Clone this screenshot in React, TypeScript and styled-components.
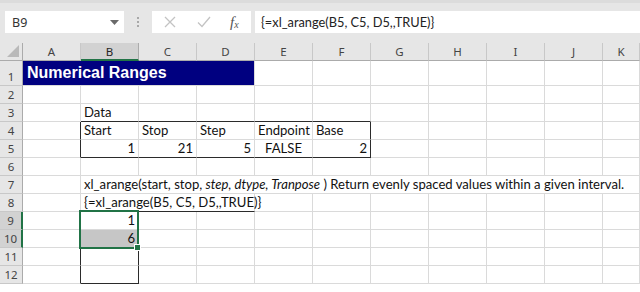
import styled, { createGlobalStyle } from "styled-components";

const GlobalStyle = createGlobalStyle`
  html, body {
    margin: 0;
    padding: 0;
    background: #ffffff;
  }
  body {
    width: 640px;
    height: 292px;
    overflow: hidden;
    font-family: "Lato", "Liberation Sans", sans-serif;
  }
`;

const GREEN = "#217346";
const GRID = "#dadada";
const DARK = "#2b2b2b";

const COLS = ["A", "B", "C", "D", "E", "F", "G", "H", "I", "J", "K"];
const ROWS = 12;

type Box = { r1: number; r2: number; c1: number; c2: number };

// outlined ranges: B4:F5 and B9:B12 (cols are 0-based, A = 0)
const boxes: Box[] = [
    { r1: 4, r2: 5, c1: 1, c2: 5 },
    { r1: 9, r2: 12, c1: 1, c2: 1 },
];

const rightDark = (r: number, c: number) =>
    boxes.some(b => r >= b.r1 && r <= b.r2 && (c === b.c2 || c + 1 === b.c1));
const bottomDark = (r: number, c: number) =>
    boxes.some(b => c >= b.c1 && c <= b.c2 && (r === b.r2 || r + 1 === b.r1));

type CellData = {
    text?: React.ReactNode;
    align?: "left" | "right" | "center";
    span?: number;
    spill?: boolean;
};

const data: Record<string, CellData> = {
    "3,1": { text: "Data" },
    "4,1": { text: "Start" },
    "4,2": { text: "Stop" },
    "4,3": { text: "Step" },
    "4,4": { text: "Endpoint" },
    "4,5": { text: "Base" },
    "5,1": { text: "1", align: "right" },
    "5,2": { text: "21", align: "right" },
    "5,3": { text: "5", align: "right" },
    "5,4": { text: "FALSE", align: "center" },
    "5,5": { text: "2", align: "right" },
    "7,1": {
        span: 10,
        text: (
            <span>
                xl_arange(start, stop, <i>step, dtype, Tranpose</i> ) Return evenly spaced values within a given interval.
            </span>
        ),
    },
    "8,1": { span: 3, spill: true, text: "{=xl_arange(B5, C5, D5,,TRUE)}" },
    "9,1": { text: "1", align: "right" },
    "10,1": { text: "6", align: "right" },
};

export default function App() {
    const cells: React.ReactNode[] = [];
    for (let r = 1; r <= ROWS; r++) {
        const sel = r === 9 || r === 10;
        cells.push(
            <RowHeader key={`h${r}`} $row={r + 1} selected={sel}>{r}</RowHeader>
        );
        if (r === 1) {
            cells.push(<TitleCell key="title">Numerical Ranges</TitleCell>);
            for (let c = 4; c < COLS.length; c++) {
                cells.push(
                    <Cell key={`1,${c}`} $row={2} $col={c + 2} $right={GRID} $bottom={GRID} />
                );
            }
            continue;
        }
        for (let c = 0; c < COLS.length; c++) {
            const d = data[`${r},${c}`];
            const span = d?.span ?? 1;
            const last = c + span - 1;
            cells.push(
                <Cell
                    key={`${r},${c}`}
                    $row={r + 1}
                    $col={c + 2}
                    $span={span}
                    $spill={d?.spill}
                    $align={d?.align ?? "left"}
                    $right={rightDark(r, last) ? DARK : GRID}
                    $bottom={bottomDark(r, c) ? DARK : GRID}
                    $fill={r === 10 && c === 1 ? "#c6c6c6" : "transparent"}
                >
                    {d?.text}
                </Cell>
            );
            c = last;
        }
    }

    return (
        <>
            <GlobalStyle />
            <Page>
                <FormulaBar>
                    <NameBox>
                        <span>B9</span>
                        <svg width="9" height="5" viewBox="0 0 9 5">
                            <path d="M0 0 H9 L4.5 5 Z" fill="#6a6a6a" />
                        </svg>
                    </NameBox>
                    <Grip>
                        <i /><i /><i />
                    </Grip>
                    <FxBox>
                        <svg width="12" height="12" viewBox="0 0 12 12">
                            <path d="M1 1 L11 11 M11 1 L1 11" stroke="#c3c3c3" strokeWidth="1.3" fill="none" />
                        </svg>
                        <svg width="14" height="12" viewBox="0 0 14 12">
                            <path d="M1 6.5 L5 10.5 L13 1" stroke="#c3c3c3" strokeWidth="1.3" fill="none" />
                        </svg>
                        <Fx>f<sub>x</sub></Fx>
                    </FxBox>
                    <FormulaInput>{"{=xl_arange(B5, C5, D5,,TRUE)}"}</FormulaInput>
                </FormulaBar>
                <Sheet>
                    <Corner>
                        <svg width="12" height="12" viewBox="0 0 12 12">
                            <path d="M12 0 V12 H0 Z" fill="#b9b9b9" />
                        </svg>
                    </Corner>
                    {COLS.map((col, i) => (
                        <ColHeader key={col} $col={i + 2} selected={col === "B"}>{col}</ColHeader>
                    ))}
                    {cells}
                    <Selection>
                        <Handle />
                    </Selection>
                </Sheet>
            </Page>
        </>
    );
}

const Page = styled.div`
    width: 640px;
    height: 292px;
    overflow: hidden;
    display: flex;
    flex-direction: column;
    background: #ffffff;
`;

const FormulaBar = styled.div`
    flex-shrink: 0;
    height: 43px;
    box-sizing: border-box;
    background: #e6e6e6;
    border-top: 3px solid #dcdcdc;
    padding: 8px 0 0 5px;
    display: flex;
    align-items: flex-start;
`;

const NameBox = styled.div`
    width: 119px;
    height: 22px;
    box-sizing: border-box;
    background: #ffffff;
    display: flex;
    align-items: center;
    justify-content: space-between;
    padding: 0 5px 0 7px;
    font-family: "Noto Sans", sans-serif;
    font-size: 12.5px;
    color: #333333;
`;

const Grip = styled.div`
    width: 28px;
    height: 22px;
    display: flex;
    flex-direction: column;
    align-items: center;
    justify-content: center;
    gap: 2px;

    i {
        width: 2px;
        height: 2px;
        background: #a8a8a8;
    }
`;

const FxBox = styled.div`
    width: 99px;
    height: 22px;
    box-sizing: border-box;
    background: #ffffff;
    display: flex;
    align-items: center;
    padding-left: 12px;
    gap: 21px;
`;

const Fx = styled.span`
    font-family: "Liberation Serif", serif;
    font-style: italic;
    font-size: 15px;
    color: #555555;
    margin-left: -2px;

    sub {
        font-size: 10px;
        vertical-align: -1px;
    }
`;

const FormulaInput = styled.div`
    flex: 1;
    height: 22px;
    margin-left: 4px;
    background: #ffffff;
    display: flex;
    align-items: center;
    padding-left: 6px;
    font-family: "Lato", sans-serif;
    font-size: 12.8px;
    color: #222222;
    white-space: nowrap;
`;

const Sheet = styled.div`
    flex-shrink: 0;
    display: grid;
    grid-template-columns: 23px repeat(10, 58px) 1fr;
    grid-template-rows: 18px 25px repeat(12, 18px);
    font-family: "Lato", "Liberation Sans", sans-serif;
    font-size: 13.1px;
    color: #111111;
`;

const Corner = styled.div`
    grid-row: 1;
    grid-column: 1;
    background: #e6e6e6;
    border-right: 1px solid #ababab;
    border-bottom: 1px solid #ababab;
    display: flex;
    align-items: flex-end;
    justify-content: flex-end;
    padding: 0 3px 3px 0;
`;

const ColHeader = styled.div<{ $col: number; selected?: boolean }>`
    grid-row: 1;
    grid-column: ${p => p.$col};
    background: ${p => (p.selected ? "#d2d2d2" : "#e6e6e6")};
    border-right: 1px solid ${p => (p.selected ? "#ababab" : "#c8c8c8")};
    border-bottom: ${p => (p.selected ? `2px solid ${GREEN}` : "1px solid #ababab")};
    display: flex;
    align-items: center;
    justify-content: center;
    font-family: "Noto Sans", sans-serif;
    font-size: 11.5px;
    color: ${p => (p.selected ? "#262626" : "#444444")};
`;

const RowHeader = styled.div<{ $row: number; selected?: boolean }>`
    grid-row: ${p => p.$row};
    grid-column: 1;
    background: ${p => (p.selected ? "#d2d2d2" : "#e6e6e6")};
    border-right: ${p => (p.selected ? `2px solid ${GREEN}` : "1px solid #ababab")};
    border-bottom: 1px solid #c8c8c8;
    display: flex;
    align-items: flex-end;
    justify-content: center;
    padding-bottom: 1px;
    font-family: "Noto Sans", sans-serif;
    font-size: 11.5px;
    color: #444444;
`;

const Cell = styled.div<{
    $row: number;
    $col: number;
    $span?: number;
    $spill?: boolean;
    $align?: string;
    $right: string;
    $bottom: string;
    $fill?: string;
}>`
    grid-row: ${p => p.$row};
    grid-column: ${p => p.$col} / span ${p => p.$span ?? 1};
    box-sizing: border-box;
    min-width: 0;
    border-right: 1px solid ${p => p.$right};
    border-bottom: 1px solid ${p => p.$bottom};
    background: ${p => p.$fill ?? "transparent"};
    display: flex;
    align-items: flex-end;
    justify-content: ${p =>
        p.$align === "right" ? "flex-end" : p.$align === "center" ? "center" : "flex-start"};
    padding: 0 3px 1px 3px;
    white-space: nowrap;
    overflow: ${p => (p.$spill ? "visible" : "hidden")};
    line-height: 16px;

    i {
        font-style: italic;
    }
`;

const TitleCell = styled.div`
    grid-row: 2;
    grid-column: 2 / span 4;
    background: #000080;
    border-bottom: 1px solid ${GRID};
    border-right: 1px solid ${GRID};
    color: #ffffff;
    font-family: "Liberation Sans", Arial, sans-serif;
    font-weight: bold;
    font-size: 16px;
    display: flex;
    align-items: flex-end;
    padding: 0 0 3px 4px;
    white-space: nowrap;
`;

const Selection = styled.div`
    grid-column: 3;
    grid-row: 10 / span 2;
    margin: -2px 0 -1px -2px;
    border: 2px solid ${GREEN};
    position: relative;
    pointer-events: none;
`;

const Handle = styled.div`
    position: absolute;
    right: -4px;
    bottom: -4px;
    width: 5px;
    height: 5px;
    background: ${GREEN};
    border: 1px solid #ffffff;
`;
